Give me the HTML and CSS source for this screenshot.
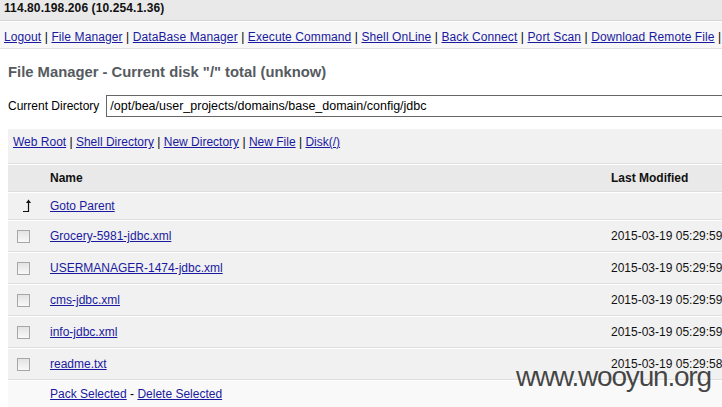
FILE: index.html
```html
<!DOCTYPE html>
<html>
<head>
<meta charset="utf-8">
<title>File Manager</title>
<link rel="stylesheet" href="styles.css">
</head>
<body>
<div class="page">
  <div class="top">114.80.198.206 (10.254.1.36)</div>
  <div class="nav">
    <a href="#">Logout</a> | <a href="#">File Manager</a> | <a href="#">DataBase Manager</a> | <a href="#">Execute Command</a> | <a href="#">Shell OnLine</a> | <a href="#">Back Connect</a> | <a href="#">Port Scan</a> | <a href="#">Download Remote File</a> | <a href="#">Clone File Time</a> | <a href="#">Create MySQL User</a> | <a href="#">Kernel Information</a>
  </div>
  <div class="content">
    <h2 class="title">File Manager - Current disk "/" total (unknow)</h2>
    <div class="dirrow">
      <span class="dirlabel">Current Directory</span>
      <input class="dirinput" type="text" value="/opt/bea/user_projects/domains/base_domain/config/jdbc">
    </div>
    <table class="files">
      <colgroup>
        <col class="c-check">
        <col class="c-name">
        <col class="c-date">
        <col class="c-size">
        <col class="c-perm">
        <col class="c-act">
      </colgroup>
      <tr class="bar">
        <td colspan="6"><a href="#">Web Root</a> | <a href="#">Shell Directory</a> | <a href="#">New Directory</a> | <a href="#">New File</a> | <a href="#">Disk(/)</a></td>
      </tr>
      <tr class="head">
        <td>&nbsp;</td><td>Name</td><td>Last Modified</td><td>Size</td><td>Read/Write/Execute</td><td>&nbsp;</td>
      </tr>
      <tr class="row parent">
        <td><svg class="up" width="11" height="14" viewBox="0 0 11 14"><path d="M1 12.5H6.5V2" fill="none" stroke="#111" stroke-width="1.2"/><path d="M6.5 0.5L4 4H9Z" fill="#111"/></svg></td>
        <td><a href="#">Goto Parent</a></td><td></td><td></td><td></td><td></td>
      </tr>
      <tr class="row">
        <td><input class="cb" type="checkbox"></td>
        <td><a href="#">Grocery-5981-jdbc.xml</a></td><td>2015-03-19 05:29:59</td><td>1.2K</td><td>R/W/-</td><td></td>
      </tr>
      <tr class="row">
        <td><input class="cb" type="checkbox"></td>
        <td><a href="#">USERMANAGER-1474-jdbc.xml</a></td><td>2015-03-19 05:29:59</td><td>1.2K</td><td>R/W/-</td><td></td>
      </tr>
      <tr class="row">
        <td><input class="cb" type="checkbox"></td>
        <td><a href="#">cms-jdbc.xml</a></td><td>2015-03-19 05:29:59</td><td>1.2K</td><td>R/W/-</td><td></td>
      </tr>
      <tr class="row">
        <td><input class="cb" type="checkbox"></td>
        <td><a href="#">info-jdbc.xml</a></td><td>2015-03-19 05:29:59</td><td>1.2K</td><td>R/W/-</td><td></td>
      </tr>
      <tr class="row">
        <td><input class="cb" type="checkbox"></td>
        <td><a href="#">readme.txt</a></td><td>2015-03-19 05:29:58</td><td>0.3K</td><td>R/W/-</td><td></td>
      </tr>
      <tr class="foot">
        <td></td>
        <td colspan="5"><a href="#">Pack Selected</a> - <a href="#">Delete Selected</a></td>
      </tr>
    </table>
  </div>
</div>
<div class="watermark">www.wooyun.org</div>
</body>
</html>
```

FILE: styles.css
```css
html, body {
  margin: 0;
  padding: 0;
  overflow: hidden;
  background: #fff;
}
body {
  font: 12px/16px "Liberation Sans", Arial, sans-serif;
  color: #000;
  width: 722px;
  height: 407px;
  position: relative;
}
.page {
  width: 1100px;
}
a {
  color: #1a1aa0;
  text-decoration: underline;
}
.top {
  background: #e9e9e9;
  border-bottom: 1px solid #d6d6d6;
  height: 20px;
  line-height: 16px;
  padding-left: 4px;
  font-weight: bold;
  color: #111;
  letter-spacing: 0.1px;
}
.nav {
  background: #f7f7f7;
  border-top: 1px solid #fff;
  border-bottom: 1px solid #e2e2e2;
  padding: 7px 0 3px 4px;
  height: 16px;
  white-space: nowrap;
  color: #000;
  letter-spacing: 0.1px;
}
.content {
  padding: 0 0 0 8px;
}
.title {
  margin: 11px 0 0 0;
  height: 24px;
  line-height: 24px;
  font-size: 14.8px;
  color: #555b60;
}
.dirrow {
  display: flex;
  align-items: center;
  margin-top: 10px;
  height: 24px;
}
.dirlabel {
  white-space: nowrap;
  margin-right: 7px;
}
.dirinput {
  font: 12.5px "Liberation Sans", Arial, sans-serif;
  width: 800px;
  height: 22px;
  box-sizing: border-box;
  border: 1px solid #666;
  padding: 2px 2px 2px 3px;
  margin: 0;
  background: #fff;
  color: #000;
}
.files {
  margin-top: 10px;
  border-collapse: separate;
  border-spacing: 0;
  table-layout: fixed;
  width: 1060px;
}
.c-check { width: 37px; }
.c-name { width: 561px; }
.c-date { width: 150px; }
.c-size { width: 80px; }
.c-perm { width: 140px; }
.c-act { width: 92px; }
.files td {
  padding: 5px 10px 5px 5px;
  border-top: 1px solid #fff;
  border-bottom: 1px solid #dedede;
  white-space: nowrap;
  vertical-align: middle;
}
.files .bar td {
  background: #f1f1f1;
  padding: 5px 5px 13px 5px;
  vertical-align: top;
}
.head td {
  background: #e9e9e9;
  font-weight: bold;
  color: #111;
}
.row td {
  background: #f1f1f1;
  color: #111;
}
.row.parent td {
  height: 16px;
}
.row td {
  height: 20px;
}
.foot td {
  background: #f9f9f9;
  border-bottom: none;
}
.up {
  display: block;
  margin-left: 9px;
}
.cb {
  -webkit-appearance: none;
  appearance: none;
  width: 13px;
  height: 13px;
  margin: 3px 3px 3px 4px;
  border: 1px solid #a7a7a7;
  background: linear-gradient(#e3e3e3, #f8f8f8);
  box-sizing: border-box;
  vertical-align: middle;
  display: block;
}
.watermark {
  position: absolute;
  left: 516px;
  top: 361px;
  font: 28px/32px "Liberation Sans", Arial, sans-serif;
  letter-spacing: -1.2px;
  color: rgba(45, 45, 45, 0.88);
  white-space: nowrap;
}
```
